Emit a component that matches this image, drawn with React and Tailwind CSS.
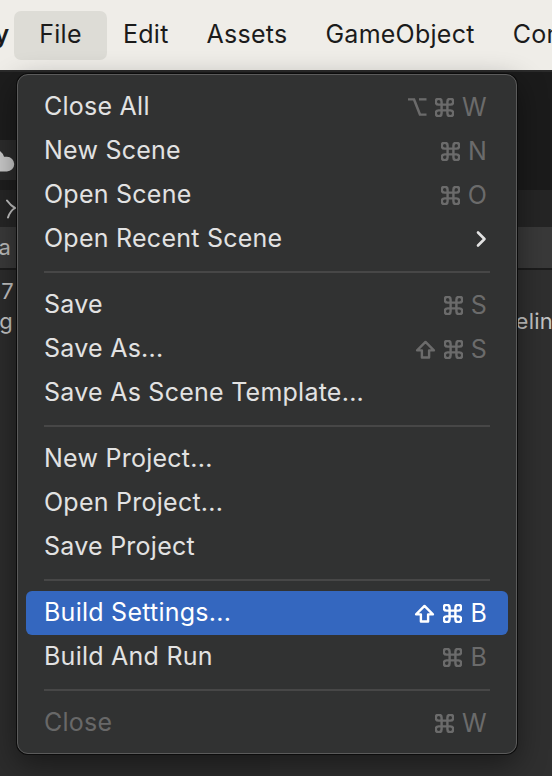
function CmdIcon() {
  return (
    <svg width="19" height="19" viewBox="2.2 2.2 19.6 19.6" fill="none" stroke="currentColor" strokeWidth="2.5" strokeLinecap="round" strokeLinejoin="round">
      <path d="M15 6v12a3 3 0 1 0 3-3H6a3 3 0 1 0 3 3V6a3 3 0 1 0-3 3h12a3 3 0 1 0-3-3" />
    </svg>
  );
}

function OptIcon() {
  return (
    <svg width="20" height="18" viewBox="2 2 20 20" preserveAspectRatio="none" fill="none" stroke="currentColor" strokeWidth="2.6" strokeLinecap="butt" strokeLinejoin="miter">
      <path d="M3 3.5h6l6 17h6.5" />
      <path d="M14 3.5h7.5" />
    </svg>
  );
}

function ShiftIcon() {
  return (
    <svg width="21" height="19" viewBox="3.6 3.6 16.8 15.8" fill="none" stroke="currentColor" strokeWidth="2" strokeLinejoin="round">
      <path d="M9 18.2v-6H5l7-7 7 7h-4v6H9z" />
    </svg>
  );
}

function SubmenuArrow() {
  return (
    <svg width="12" height="18" viewBox="0 0 12 18" fill="none" stroke="#e2e2e2" strokeWidth="2.6" strokeLinecap="round" strokeLinejoin="round">
      <path d="M3 2.5 9.5 9 3 15.5" />
    </svg>
  );
}

const items = [
  { label: 'Close All', keys: ['opt', 'cmd', 'W'] },
  { label: 'New Scene', keys: ['cmd', 'N'] },
  { label: 'Open Scene', keys: ['cmd', 'O'] },
  { label: 'Open Recent Scene', submenu: true },
  'sep',
  { label: 'Save', keys: ['cmd', 'S'] },
  { label: 'Save As...', keys: ['shift', 'cmd', 'S'] },
  { label: 'Save As Scene Template...' },
  'sep',
  { label: 'New Project...' },
  { label: 'Open Project...' },
  { label: 'Save Project' },
  'sep',
  { label: 'Build Settings...', keys: ['shift', 'cmd', 'B'], active: true },
  { label: 'Build And Run', keys: ['cmd', 'B'] },
  'sep',
  { label: 'Close', keys: ['cmd', 'W'], disabled: true },
];

function Key({ k }) {
  if (k === 'cmd') return <CmdIcon />;
  if (k === 'opt') return <OptIcon />;
  if (k === 'shift') return <ShiftIcon />;
  return <span className="leading-none">{k}</span>;
}

function MenuRow({ item }) {
  const labelColor = item.active ? 'text-white' : item.disabled ? 'text-[#686868]' : 'text-[#e2e2e2]';
  const keyColor = item.active ? 'text-white' : 'text-[#6b6b6b]';
  return (
    <div
      className={
        'h-[44px] flex items-center justify-between pl-[18px] pr-[21px] rounded-[6px] ' +
        (item.active ? 'bg-[#3467bf]' : '')
      }
    >
      <span className={labelColor}>{item.label}</span>
      {item.keys && (
        <span className={'flex items-center gap-[8px] ' + keyColor}>
          {item.keys.map((k, i) => (
            <Key key={i} k={k} />
          ))}
        </span>
      )}
      {item.submenu && <SubmenuArrow />}
    </div>
  );
}

export default function App() {
  return (
    <div className="relative h-[776px] w-[552px] overflow-hidden flex flex-col bg-[#2d2d2d] font-['Inter','Noto_Sans',sans-serif] tracking-[0.25px]">
      {/* macOS menu bar */}
      <div className="h-[72px] shrink-0 flex items-center bg-[#efede8] border-b-2 border-[#2a2a2a] text-[25px] text-[#1b1b1b]">
        <span className="w-[62px] shrink-0 -ml-[56px] text-right font-semibold">Unity</span>
        <div className="ml-[8px] w-[93px] h-[49px] shrink-0 flex items-center justify-center rounded-[7px] bg-[#dddcd6]">
          File
        </div>
        <div className="ml-[16px] flex items-center gap-[38px] whitespace-nowrap">
          <span>Edit</span>
          <span>Assets</span>
          <span>GameObject</span>
          <span>Component</span>
        </div>
      </div>

      {/* editor behind the menu */}
      <div className="flex-1 flex text-[22px] text-[#c4c4c4]">
        <div className="w-[270px] shrink-0 flex flex-col">
          <div className="h-[68px] bg-[#1d1d1d]" />
          <div className="h-[40px] bg-[#2c2c2c] flex items-center">
            <svg width="34" height="26" viewBox="2 4 20 16" className="-ml-[19px]" fill="#c9c9c9">
              <path d="M17.5 19H9a7 7 0 1 1 6.71-9h1.79a4.5 4.5 0 1 1 0 9Z" />
            </svg>
          </div>
          <div className="h-[10px] bg-[#1e1e1e]" />
          <div className="h-[37px] bg-[#262626] flex items-center pl-[6px]">
            <svg width="10" height="20" viewBox="0 0 10 20" fill="none" stroke="#c4c4c4" strokeWidth="2" strokeLinecap="round">
              <path d="M1 1.5Q5 7 9 9M9 9Q4 12 2 18.5" />
            </svg>
          </div>
          <div className="h-[41px] bg-[#3a3a3a] flex items-center">
            <div className="w-[11px] flex justify-end whitespace-nowrap text-[#bdbdbd]">Data</div>
          </div>
          <div className="h-[2px] bg-[#1c1c1c]" />
          <div className="flex-1 bg-[#2c2c2c] pt-[6px] leading-[30px]">
            <div className="w-[14px] flex justify-end whitespace-nowrap">2017</div>
            <div className="w-[13px] flex justify-end whitespace-nowrap">Settings Config Loading</div>
          </div>
        </div>
        <div className="flex-1 flex flex-col">
          <div className="h-[118px] bg-[#1b1b1b]" />
          <div className="h-[37px] bg-[#252525]" />
          <div className="h-[41px] bg-[#393939]" />
          <div className="h-[2px] bg-[#1c1c1c]" />
          <div className="flex-1 bg-[#2f2f2f] pt-[6px] leading-[30px]">
            <div className="h-[30px]" />
            <div className="pl-[212px] whitespace-nowrap">Pipeline</div>
          </div>
        </div>
      </div>

      {/* File dropdown */}
      <div className="absolute left-[17px] top-[74px] w-[500px] rounded-[11px] border border-[#5b5b5b] bg-[#313232] pt-[10px] pb-[8px] px-[8px] text-[25px] shadow-[0_0_0_1px_#0c0c0c,0_10px_30px_rgba(0,0,0,0.45)]">
        {items.map((item, i) =>
          item === 'sep' ? (
            <div key={i} className="h-[22px] flex items-center px-[18px]">
              <div className="h-[2px] w-full bg-[#474747]" />
            </div>
          ) : (
            <MenuRow key={i} item={item} />
          )
        )}
      </div>
    </div>
  );
}
